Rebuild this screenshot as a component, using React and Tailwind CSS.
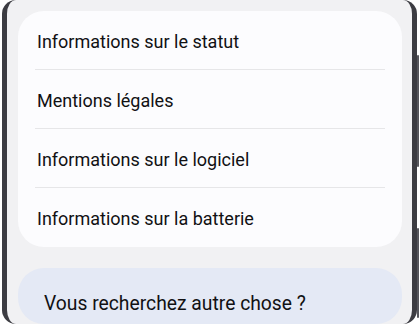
export default function App() {
  const rows = [
    "Informations sur le statut",
    "Mentions légales",
    "Informations sur le logiciel",
    "Informations sur la batterie",
  ];
  return (
    <div className="relative w-[420px] h-[325px] overflow-hidden bg-white" style={{ fontFamily: "Roboto, 'Noto Sans', sans-serif" }}>
      <div className="ml-[2px] w-[415px] h-[324px] border-x-[5px] border-x-[#3c3c42] rounded-[14px] bg-[#f1f1f3] pt-[11px] pl-[11px] pr-[10px] flex flex-col gap-[21px]">
        <div className="bg-[#fcfcfe] rounded-[26px] px-[17px]">
          {rows.map((r, i) => (
            <div key={r} className={`h-[59px] flex items-center px-[2px] pt-[2px] ${i < rows.length - 1 ? "border-b border-[#e6e6e8]" : ""}`}>
              <span className="text-[18px] text-[#111113]">{r}</span>
            </div>
          ))}
        </div>
        <div className="bg-[#e4e9f5] rounded-[26px] h-[80px] px-[26px] pt-[22px]">
          <span className="text-[19.3px] text-[#111113]">Vous recherchez autre chose ?</span>
        </div>
      </div>
      <div className="absolute left-[417px] top-[55px] w-[2px] h-[112px] bg-[#55555b] rounded-sm" />
      <div className="absolute left-[417px] top-[228px] w-[2px] h-[90px] bg-[#55555b] rounded-sm" />
    </div>
  );
}
